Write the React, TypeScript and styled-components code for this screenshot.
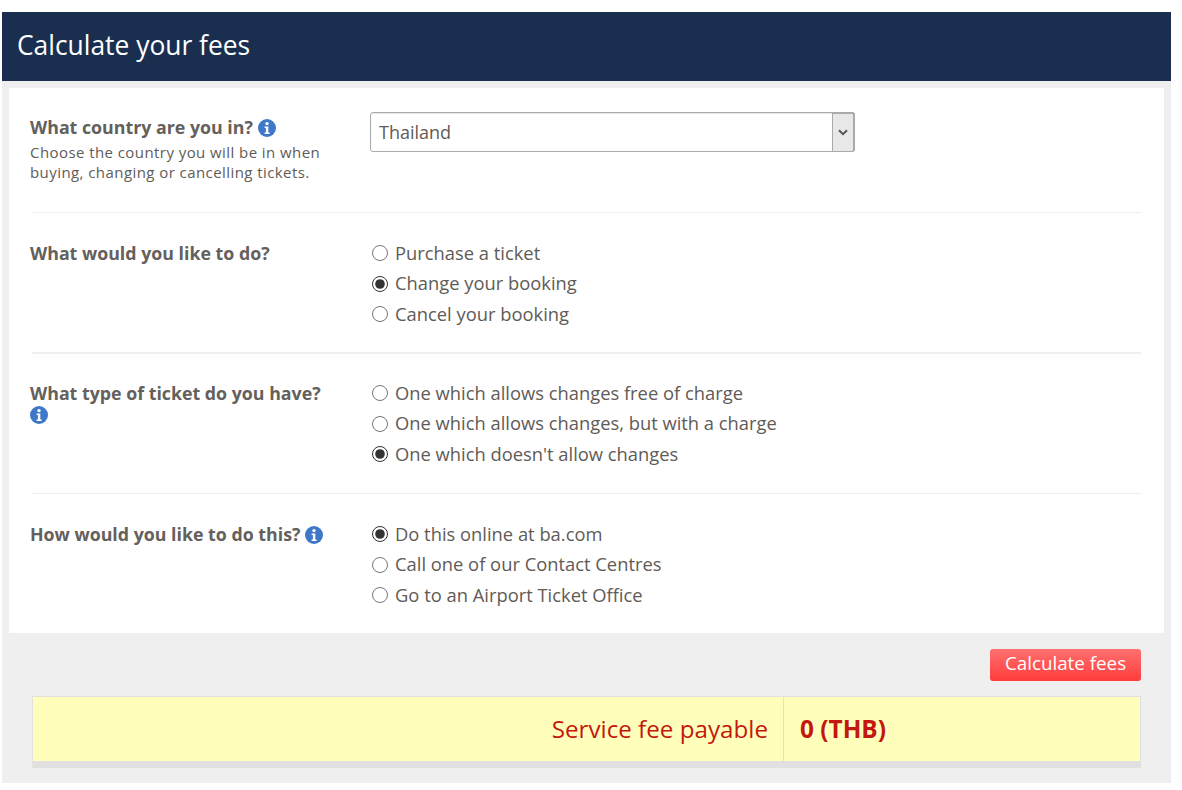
import React from 'react';
import styled, { createGlobalStyle } from 'styled-components';

const GlobalStyle = createGlobalStyle`
  html, body {
    margin: 0;
    padding: 0;
    background: #fff;
  }
  body {
    font-family: 'Open Sans', 'Noto Sans', 'Liberation Sans', sans-serif;
    color: #5f5b57;
  }
`;

const questions = [
  {
    id: 'action',
    label: 'What would you like to do?',
    info: false,
    wrapInfo: false,
    thickDivider: false,
    checked: 'Change your booking',
    options: ['Purchase a ticket', 'Change your booking', 'Cancel your booking'],
  },
  {
    id: 'ticket',
    label: 'What type of ticket do you have?',
    info: true,
    wrapInfo: true,
    thickDivider: true,
    checked: "One which doesn't allow changes",
    options: [
      'One which allows changes free of charge',
      'One which allows changes, but with a charge',
      "One which doesn't allow changes",
    ],
  },
  {
    id: 'channel',
    label: 'How would you like to do this?',
    info: true,
    wrapInfo: false,
    thickDivider: false,
    checked: 'Do this online at ba.com',
    options: ['Do this online at ba.com', 'Call one of our Contact Centres', 'Go to an Airport Ticket Office'],
  },
];

function InfoIcon() {
  return (
    <InfoSvg viewBox="0 0 18 18" aria-hidden="true">
      <circle cx="9" cy="9" r="9" fill="#3f78c9" />
      <circle cx="9" cy="4.6" r="1.7" fill="#fff" />
      <path d="M6.6 7.4h3.7v6h1.3v1.5H6.6v-1.5h1.3V8.9H6.6z" fill="#fff" />
    </InfoSvg>
  );
}

export default function App() {
  return (
    <>
      <GlobalStyle />
      <Page>
        <Header>Calculate your fees</Header>
        <FormPanel>
          <FirstRow>
            <LabelColumn>
              <Question>
                What country are you in? <InfoIcon />
              </Question>
              <Hint>Choose the country you will be in when buying, changing or cancelling tickets.</Hint>
            </LabelColumn>
            <SelectWrap>
              <CountrySelect defaultValue="Thailand">
                <option>Thailand</option>
              </CountrySelect>
              <SelectArrow>
                <svg width="10" height="7" viewBox="0 0 10 7" aria-hidden="true">
                  <path d="M1 1.2l4 4 4-4" fill="none" stroke="#555" strokeWidth="2" />
                </svg>
              </SelectArrow>
            </SelectWrap>
          </FirstRow>
          {questions.map((q) => (
            <Row key={q.id} $thick={q.thickDivider}>
              <LabelColumn>
                <Question>
                  {q.label}
                  {q.wrapInfo ? <br /> : ' '}
                  {q.info && <InfoIcon />}
                </Question>
              </LabelColumn>
              <Options>
                {q.options.map((option) => (
                  <OptionLabel key={option}>
                    <Radio type="radio" name={q.id} defaultChecked={option === q.checked} />
                    {option}
                  </OptionLabel>
                ))}
              </Options>
            </Row>
          ))}
        </FormPanel>
        <Actions>
          <CalculateButton type="button">Calculate fees</CalculateButton>
        </Actions>
        <ResultBox>
          <ResultLabel>Service fee payable</ResultLabel>
          <ResultValue>0 (THB)</ResultValue>
        </ResultBox>
      </Page>
    </>
  );
}

const Page = styled.main`
  width: 1169px;
  height: 771px;
  margin: 12px 0 0 2px;
  background: #efefef;
  box-sizing: border-box;
`;

const Header = styled.h1`
  margin: 0;
  height: 69px;
  padding: 0 15px;
  background: #1a2f50;
  color: #fff;
  font-size: 26.4px;
  font-weight: 400;
  line-height: 66px;
`;

const FormPanel = styled.section`
  margin: 7px 7px 0;
  height: 545px;
  padding: 0 23px 0 21px;
  background: #fff;
  box-sizing: border-box;
`;

const Row = styled.div<{ $thick: boolean }>`
  display: flex;
  height: ${(p) => (p.$thick ? '141px' : '140px')};
  padding-top: ${(p) => (p.$thick ? '24px' : '25px')};
  box-sizing: border-box;
  border-top: ${(p) => (p.$thick ? '2px' : '1px')} solid #eee;
  margin-left: 2px;
`;

const FirstRow = styled.div`
  display: flex;
  height: 124px;
  padding-top: 24px;
  box-sizing: border-box;
  margin-left: 2px;
`;

const LabelColumn = styled.div`
  width: 339px;
  margin-left: -2px;
  flex: none;
`;

const Question = styled.div`
  width: 320px;
  margin-top: 5px;
  font-size: 17.8px;
  font-weight: 700;
  line-height: 21px;
  color: #64605c;
`;

const InfoSvg = styled.svg`
  width: 18px;
  height: 18px;
  vertical-align: -2.5px;
`;

const Hint = styled.p`
  margin: 4px 0 0;
  width: 310px;
  font-size: 15px;
  letter-spacing: 0.43px;
  line-height: 20px;
`;

const SelectWrap = styled.div`
  position: relative;
  width: 485px;
  height: 40px;
  margin-left: 1px;
`;

const CountrySelect = styled.select`
  appearance: none;
  display: block;
  width: 100%;
  height: 100%;
  padding: 0 0 0 8px;
  border: 1px solid #aaa;
  border-radius: 3px;
  box-shadow: inset 0 1px 1px #e6e6e6;
  background: #fff;
  color: #5f5b57;
  font-family: inherit;
  font-size: 18px;
`;

const SelectArrow = styled.span`
  position: absolute;
  top: 0;
  right: 0;
  bottom: 0;
  width: 23px;
  box-sizing: border-box;
  display: flex;
  align-items: center;
  justify-content: center;
  background: #e8e8e8;
  border: 1px solid #aaa;
  border-top-width: 2px;
  border-right-width: 2px;
  border-radius: 0 3px 3px 0;
`;

const Options = styled.div`
  display: flex;
  flex-direction: column;
  margin-left: 1px;
`;

const OptionLabel = styled.label`
  display: flex;
  align-items: center;
  height: 30.5px;
  padding-bottom: 1.6px;
  box-sizing: border-box;
  font-size: 18.35px;
  color: #5f5b57;
`;

const Radio = styled.input`
  width: 16px;
  height: 16px;
  margin: 1.6px 7px 0 2px;
  accent-color: #333;
`;

const Actions = styled.div`
  display: flex;
  justify-content: flex-end;
  padding: 16px 30px 15px 0;
`;

const CalculateButton = styled.button`
  width: 151px;
  height: 32px;
  padding: 0 0 5px;
  border: none;
  border-radius: 3px;
  background: linear-gradient(#ff7070, #ff3c3c);
  color: #fff;
  font-family: inherit;
  font-size: 18.8px;
  font-weight: 500;
`;

const ResultBox = styled.div`
  display: flex;
  width: 1109px;
  height: 72px;
  margin-left: 30px;
  box-sizing: border-box;
  border: 1px solid #e2e0e0;
  border-bottom: 7px solid #e0e0e0;
  background: #ffffbb;
`;

const ResultLabel = styled.div`
  width: 751px;
  padding-right: 15px;
  box-sizing: border-box;
  border-right: 1px solid #e2e2cc;
  color: #c4170f;
  font-size: 24.2px;
  line-height: 64px;
  text-align: right;
`;

const ResultValue = styled.div`
  padding-left: 16px;
  color: #c4170f;
  font-size: 24.4px;
  font-weight: 700;
  line-height: 64px;
`;
